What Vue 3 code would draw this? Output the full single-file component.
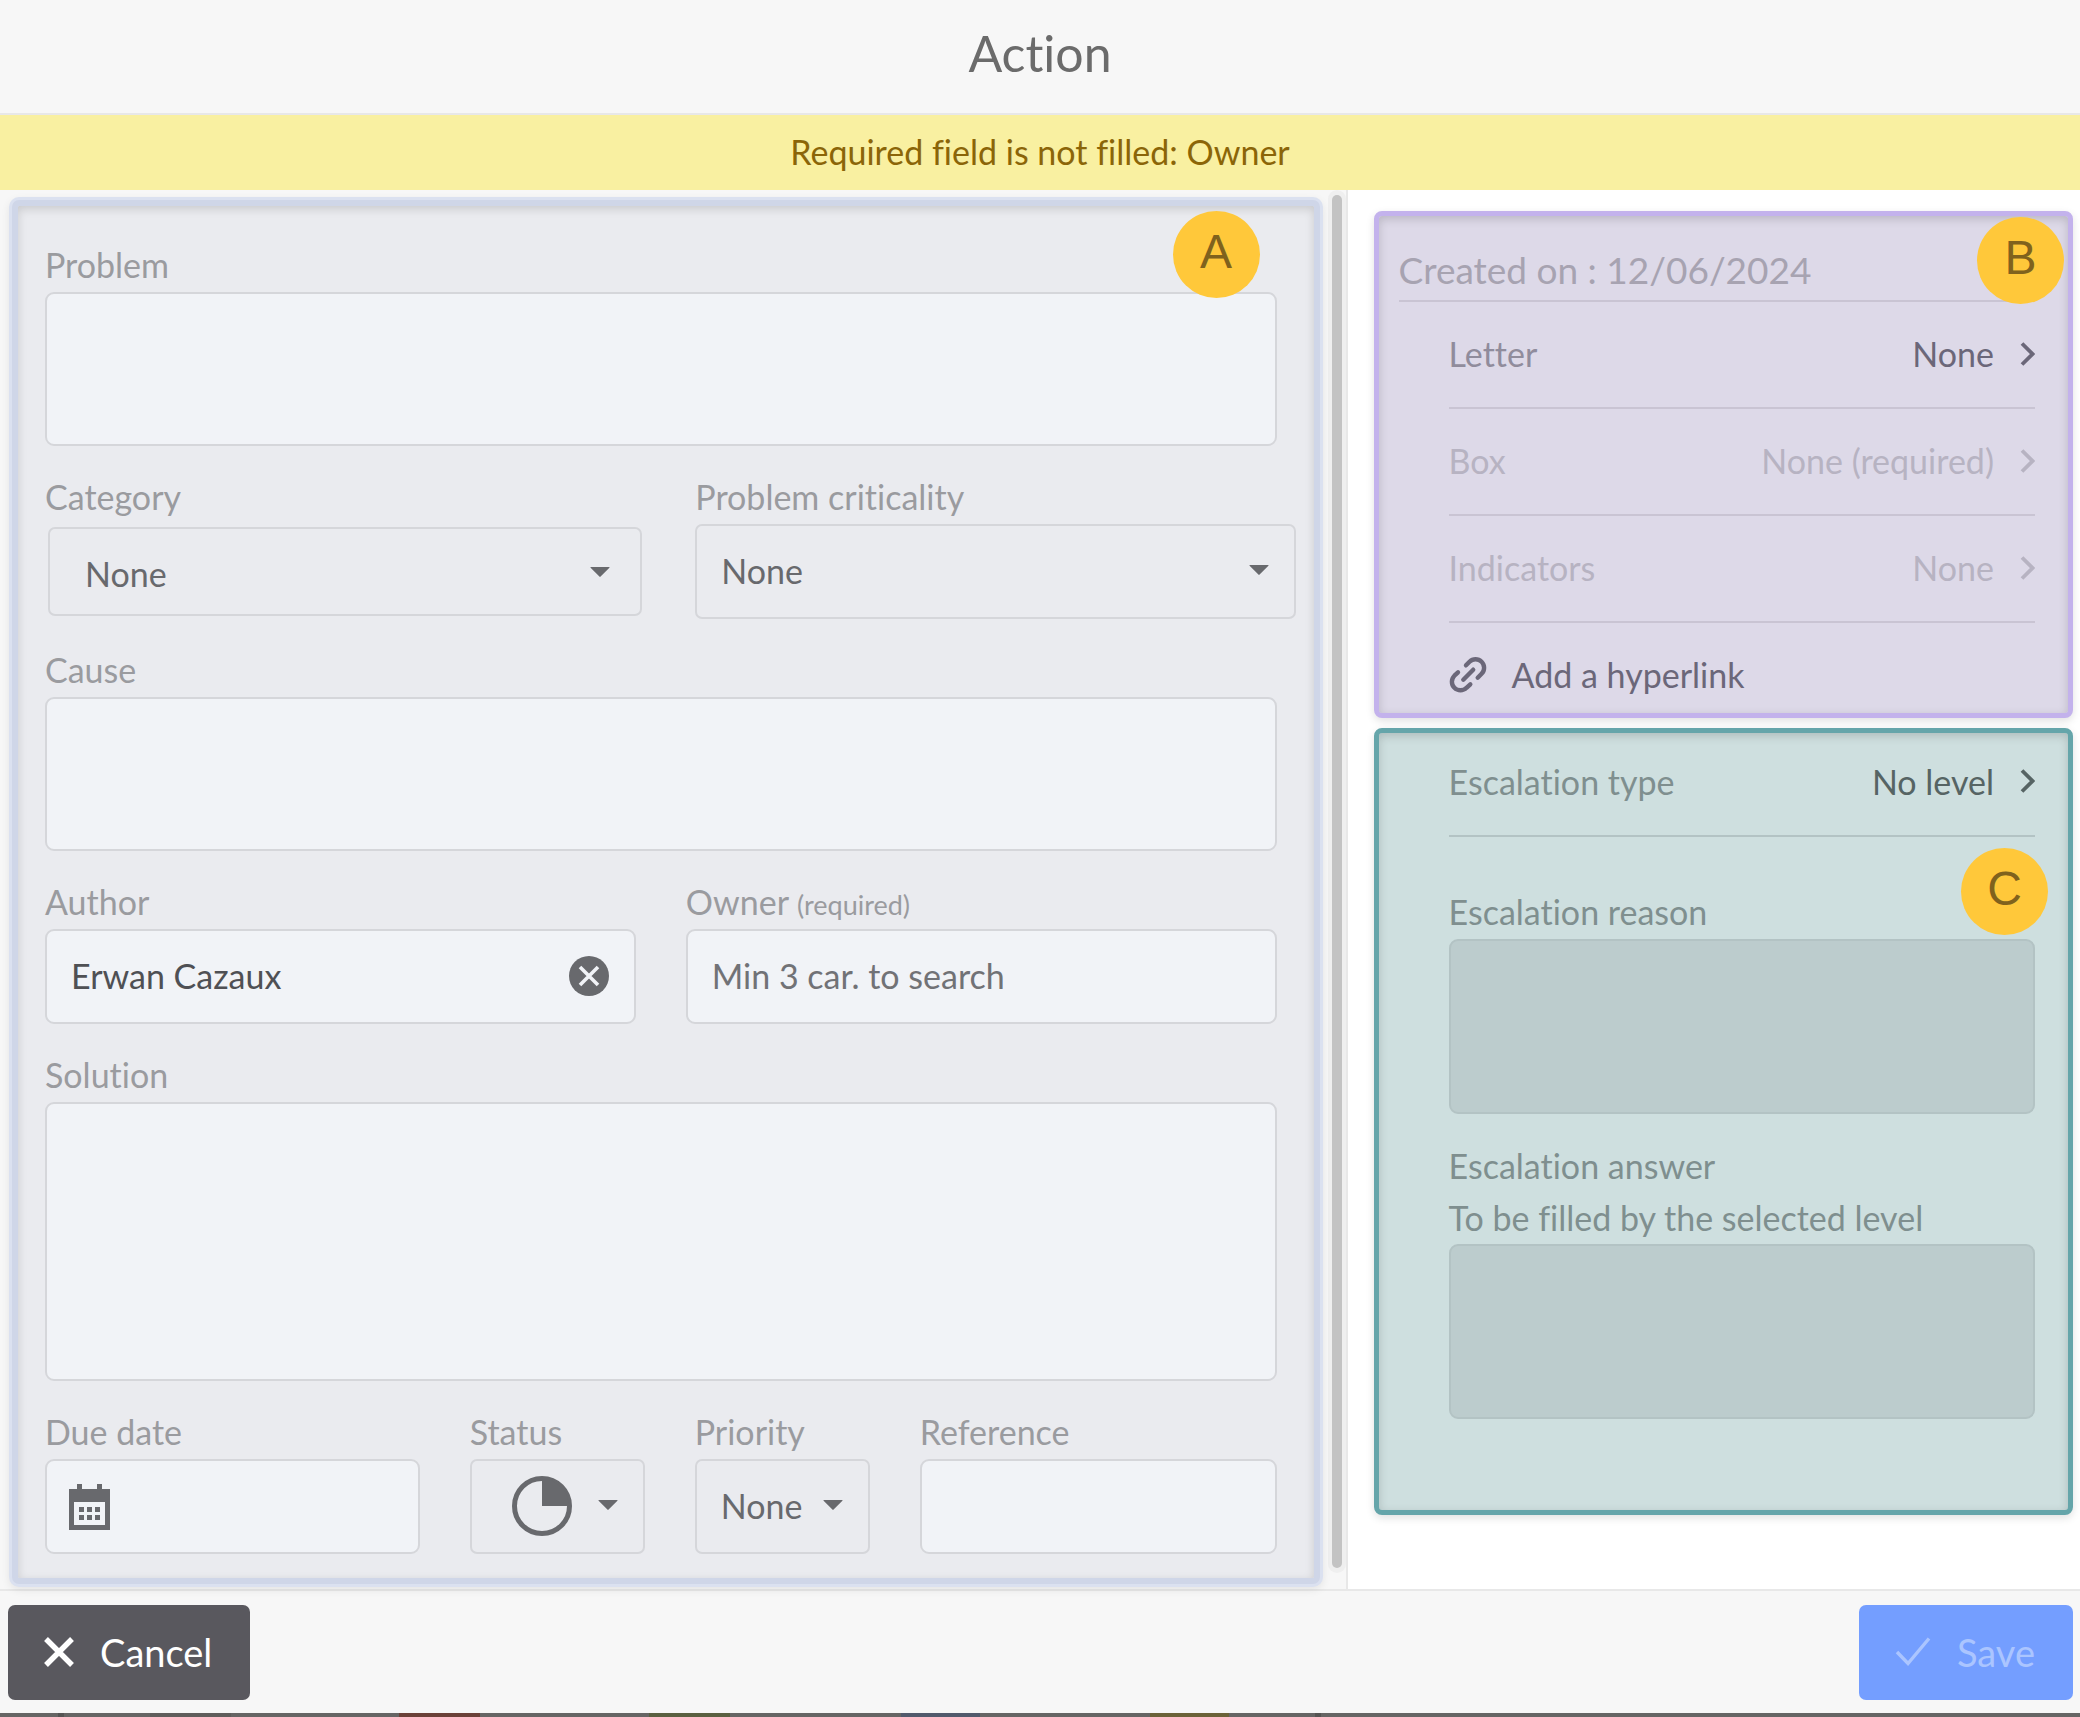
<script setup>
import { ref } from 'vue'

const problem = ref('')
const cause = ref('')
const author = ref('Erwan Cazaux')
const owner = ref('')
const solution = ref('')
const dueDate = ref('')
const reference = ref('')

const links = [
  { label: 'Letter', value: 'None', disabled: false },
  { label: 'Box', value: 'None (required)', disabled: true },
  { label: 'Indicators', value: 'None', disabled: true },
]

const strip = [
  { left: 2.8, width: 0.3, color: '#555453' },
  { left: 7.2, width: 3.9, color: '#5f5d5b' },
  { left: 19.2, width: 3.9, color: '#6b4138' },
  { left: 31.2, width: 3.9, color: '#5a6040' },
  { left: 43.3, width: 3.8, color: '#525a6c' },
  { left: 55.3, width: 3.8, color: '#6b6238' },
  { left: 63.2, width: 0.3, color: '#555453' },
]
</script>

<template>
  <div class="dialog">
    <header class="title-bar">
      <h1>Action</h1>
    </header>
    <p class="notice" role="alert">Required field is not filled: Owner</p>

    <main class="body">
      <section class="left">
        <form class="zone zone-a" @submit.prevent>
          <span class="badge badge-a">A</span>
          <div class="field">
            <label for="problem">Problem</label>
            <textarea id="problem" v-model="problem" class="control"></textarea>
          </div>
          <div class="row wide">
            <div class="field">
              <label for="category">Category</label>
              <div class="select inset">
                <select id="category" class="control"><option>None</option></select>
                <svg class="caret" viewBox="0 0 20 10"><path d="M1 0h18q1 0 .4.8L10.6 9.6q-.6.6-1.2 0L.6.8Q0 0 1 0z" /></svg>
              </div>
            </div>
            <div class="field">
              <label for="criticality">Problem criticality</label>
              <div class="select">
                <select id="criticality" class="control"><option>None</option></select>
                <svg class="caret" viewBox="0 0 20 10"><path d="M1 0h18q1 0 .4.8L10.6 9.6q-.6.6-1.2 0L.6.8Q0 0 1 0z" /></svg>
              </div>
            </div>
          </div>
          <div class="field">
            <label for="cause">Cause</label>
            <textarea id="cause" v-model="cause" class="control"></textarea>
          </div>
          <div class="row">
            <div class="field">
              <label for="author">Author</label>
              <div class="select">
                <input id="author" v-model="author" type="text" class="control author" />
                <button type="button" class="clear" aria-label="Clear author" @click="author = ''">
                  <svg viewBox="0 0 40 40">
                    <circle cx="20" cy="20" r="20" fill="#68696d" />
                    <path d="M11 11l18 18M29 11l-18 18" stroke="#f1f3f7" stroke-width="3.6" />
                  </svg>
                </button>
              </div>
            </div>
            <div class="field">
              <label for="owner">Owner <small>(required)</small></label>
              <input id="owner" v-model="owner" type="text" class="control" placeholder="Min 3 car. to search" />
            </div>
          </div>
          <div class="field">
            <label for="solution">Solution</label>
            <textarea id="solution" v-model="solution" class="control tall"></textarea>
          </div>
          <div class="row quad">
            <div class="field">
              <label for="due">Due date</label>
              <div class="select">
                <input id="due" v-model="dueDate" type="text" class="control" />
                <svg class="calendar" viewBox="0 0 41 46">
                  <path fill-rule="evenodd" d="M0 5h8V0h5v5h15V0h5v5h8v41H0zM5 18v23h31V18z" />
                  <path d="M10 23h5v5h-5zM18 23h5v5h-5zM26 23h5v5h-5zM10 31h5v5h-5zM18 31h5v5h-5zM26 31h5v5h-5z" />
                </svg>
              </div>
            </div>
            <div class="field">
              <label for="status">Status</label>
              <div class="select">
                <select id="status" class="control"><option value="25" label=" "></option></select>
                <svg class="pie" viewBox="0 0 60 60">
                  <circle cx="30" cy="30" r="27.5" fill="none" stroke="#68696d" stroke-width="5" />
                  <path d="M30 3a27 27 0 0 1 27 27H30z" />
                </svg>
                <svg class="caret" viewBox="0 0 20 10"><path d="M1 0h18q1 0 .4.8L10.6 9.6q-.6.6-1.2 0L.6.8Q0 0 1 0z" /></svg>
              </div>
            </div>
            <div class="field">
              <label for="priority">Priority</label>
              <div class="select">
                <select id="priority" class="control"><option>None</option></select>
                <svg class="caret" viewBox="0 0 20 10"><path d="M1 0h18q1 0 .4.8L10.6 9.6q-.6.6-1.2 0L.6.8Q0 0 1 0z" /></svg>
              </div>
            </div>
            <div class="field">
              <label for="reference">Reference</label>
              <input id="reference" v-model="reference" type="text" class="control" />
            </div>
          </div>
        </form>
        <div class="track"><div class="thumb"></div></div>
      </section>

      <aside class="right">
        <section class="zone zone-b">
          <span class="badge badge-b">B</span>
          <h2>Created on : 12/06/2024</h2>
          <div class="links">
            <button v-for="l in links" :key="l.label" type="button" class="link-row" :disabled="l.disabled">
              <span class="name">{{ l.label }}</span>
              <span>{{ l.value }}</span>
              <svg class="chevron" viewBox="0 0 15 24"><path d="M2 1.5L12.5 12 2 22.5" /></svg>
            </button>
            <button type="button" class="add-link">
              <svg viewBox="0 0 38 38">
                <path d="M17 9.3l3.5-3.6a8.55 8.55 0 0 1 12.1 12.1l-3.9 3.9M9 16.3l-3.6 3.4a8.55 8.55 0 0 0 12.1 12.1l3.8-3.5M14.3 23.7l9.9-10" />
              </svg>
              <span>Add a hyperlink</span>
            </button>
          </div>
        </section>

        <section class="zone zone-c">
          <span class="badge badge-c">C</span>
          <button type="button" class="link-row level">
            <span class="name">Escalation type</span>
            <span>No level</span>
            <svg class="chevron" viewBox="0 0 15 24"><path d="M2 1.5L12.5 12 2 22.5" /></svg>
          </button>
          <div class="field reason">
            <label for="reason">Escalation reason</label>
            <textarea id="reason" class="control" disabled></textarea>
          </div>
          <div class="field answer">
            <label for="answer">Escalation answer<br />To be filled by the selected level</label>
            <textarea id="answer" class="control" disabled></textarea>
          </div>
        </section>
      </aside>
    </main>

    <footer class="actions">
      <button type="button" class="btn cancel">
        <svg viewBox="0 0 30 30"><path d="M2 2l26 26M28 2l-26 26" stroke-width="5.4" /></svg>
        Cancel
      </button>
      <button type="button" class="btn save" disabled>
        <svg viewBox="0 0 36 30"><path d="M2 15l11 11.5L34 1.5" stroke-width="3.4" /></svg>
        Save
      </button>
    </footer>
    <div class="strip">
      <i v-for="s in strip" :key="s.left" :style="{ left: s.left + '%', width: s.width + '%', background: s.color }"></i>
    </div>
  </div>
</template>

<style>
body {
  margin: 0;
  background: #fff;
}
</style>

<style scoped>
* {
  box-sizing: border-box;
}
.dialog {
  min-height: 100vh;
  display: flex;
  flex-direction: column;
  font-family: Lato, "Noto Sans", sans-serif;
  font-size: 34px;
  font-variant-ligatures: none;
  color: #68696d;
}
button,
input,
select,
textarea {
  font: inherit;
  color: inherit;
  margin: 0;
}
button {
  border: 0;
  background: none;
  padding: 0;
  text-align: left;
}
.title-bar {
  display: flex;
  justify-content: center;
  align-items: center;
  height: 115px;
  padding-bottom: 8px;
  background: #f7f7f7;
  border-bottom: 2px solid #e8e8e8;
}
h1 {
  margin: 0;
  font-size: 50px;
  font-weight: 400;
  color: #6b6b6b;
}
.notice {
  margin: 0;
  padding-bottom: 2px;
  line-height: 73px;
  text-align: center;
  color: #8b6508;
  background: #f9f0a1;
}
.body {
  flex: 1;
  display: grid;
  grid-template-columns: minmax(0, 184fr) minmax(0, 100fr);
}
.left {
  display: flex;
  padding: 8px 0 2px 9px;
  background: #f7f7f7;
  border-right: 2px solid #e8e8e8;
}
.zone {
  position: relative;
  border: 5px solid;
  border-radius: 8px;
  box-shadow: 0 3px 8px rgba(0, 0, 0, 0.12), inset 0 3px 10px rgba(0, 0, 0, 0.16);
}
.zone-a {
  flex: 1;
  min-width: 0;
  display: flex;
  flex-direction: column;
  gap: 32px;
  margin: 2px 4px 3px 3px;
  padding: 40px 37px 23px 27px;
  border: 6px solid #cfd6e8;
  border-radius: 7px;
  background: #eaebef;
  box-shadow: 0 0 0 3px #dbe1f0, 0 3px 8px 3px rgba(0, 0, 0, 0.08), inset 0 3px 10px rgba(0, 0, 0, 0.14);
}
.track {
  width: 18px;
  margin: -8px 0 14px 4px;
  padding: 5px 4px;
  border-radius: 9px;
  background: #efefef;
}
.thumb {
  height: 100%;
  border-radius: 5px;
  background: #c3c3c3;
}
.badge {
  position: absolute;
  z-index: 1;
  width: 87px;
  height: 87px;
  border-radius: 50%;
  background: #ffc83a;
  color: #80621d;
  font: 48px/82px "Liberation Sans", Arial, sans-serif;
  text-align: center;
}
.badge-a {
  top: 5px;
  right: 54px;
}
.badge-b {
  top: 1px;
  right: 4px;
}
.badge-c {
  top: 115px;
  right: 20px;
}
.row {
  display: grid;
  grid-template-columns: minmax(0, 1fr) minmax(0, 1fr);
  column-gap: 50px;
}
.wide {
  margin-right: -19px;
}
.quad {
  grid-template-columns: minmax(0, 21fr) 175px 175px minmax(0, 20fr);
}
.field {
  display: flex;
  flex-direction: column;
}
label {
  line-height: 38px;
  padding-bottom: 8px;
  color: #9a9b9f;
  white-space: nowrap;
}
small {
  font-size: 27px;
  line-height: 1;
}
.control {
  display: block;
  width: 100%;
  height: 95px;
  padding: 0 24px 2px;
  border: 2px solid #d5d6da;
  border-radius: 9px;
  outline: 0;
  background: #f1f3f7;
  resize: none;
}
textarea.control {
  height: 154px;
}
textarea.tall {
  height: 279px;
}
.control::placeholder {
  color: #717276;
  opacity: 1;
}
.author {
  color: #4f5054;
}
select.control {
  appearance: none;
  background: #eaebef;
  border-radius: 7px;
}
.select {
  position: relative;
}
.inset {
  padding: 3px;
}
.inset .control {
  height: 89px;
  padding: 3px 35px 0;
}
.caret {
  position: absolute;
  right: 27px;
  top: 41px;
  width: 20px;
  height: 10px;
  fill: #68696d;
  pointer-events: none;
}
.inset .caret {
  right: 35px;
  top: 43px;
}
.clear {
  position: absolute;
  right: 27px;
  top: 27px;
  width: 40px;
  height: 40px;
}
.clear svg,
.calendar,
.pie {
  display: block;
}
.calendar {
  position: absolute;
  left: 24px;
  top: 25px;
  width: 41px;
  height: 46px;
  fill: #68696d;
}
.pie {
  position: absolute;
  left: 42px;
  top: 17px;
  width: 60px;
  height: 60px;
  fill: #68696d;
  pointer-events: none;
}
.right {
  display: flex;
  flex-direction: column;
  gap: 10px;
  padding: 21px 7px 0 26px;
  background: #fff;
}
.zone-b {
  padding: 0 33px 0 20px;
  border-color: #c3b2ec;
  background: #ddd9e8;
  color: #6b6779;
}
h2 {
  margin: 0;
  padding: 29px 0 5px;
  border-bottom: 2px solid #c9c4d3;
  font-size: 37px;
  line-height: 50px;
  font-weight: 400;
  color: #a7a3b1;
}
.links {
  padding-left: 50px;
}
.link-row {
  display: flex;
  align-items: center;
  width: 100%;
  height: 107px;
  padding-bottom: 2px;
  border-bottom: 2px solid #c9c4d3;
}
.name {
  flex: 1;
  color: #908c9c;
}
.link-row:disabled,
.link-row:disabled .name {
  color: #b7b3c2;
}
.chevron {
  width: 15px;
  height: 24px;
  margin-left: 26px;
  fill: none;
  stroke: currentColor;
  stroke-width: 3.8;
}
.add-link {
  display: flex;
  align-items: center;
  gap: 25px;
  height: 90px;
  padding-top: 13px;
}
.add-link svg {
  width: 38px;
  height: 38px;
  fill: none;
  stroke: currentColor;
  stroke-width: 4.4;
  stroke-linecap: round;
}
.zone-c {
  padding: 0 33px 91px 70px;
  border-color: #65a5aa;
  background: #cedfdf;
  color: #566464;
}
.level {
  height: 104px;
  padding-bottom: 6px;
  border-color: #b3c3c4;
}
.level .name,
.zone-c label {
  color: #7f8f8f;
}
.reason {
  margin-top: 56px;
}
.answer {
  margin-top: 26px;
}
.answer label {
  line-height: 52px;
  padding-bottom: 0;
}
.zone-c .control {
  height: 175px;
  border-color: #b3c3c4;
  background: #bccccd;
}
.actions {
  display: flex;
  justify-content: space-between;
  padding: 14px 7px 13px 8px;
  border-top: 2px solid #e8e8e8;
  background: #f7f7f7;
}
.btn {
  display: flex;
  align-items: center;
  height: 95px;
  padding: 0 38px 2px 36px;
  gap: 26px;
  border-radius: 7px;
  font-size: 38px;
}
.btn svg {
  height: 30px;
  fill: none;
  stroke: currentColor;
}
.cancel {
  background: #59585e;
  color: #fff;
}
.save {
  background: #749eff;
  color: #abc5ff;
}
.strip {
  position: relative;
  height: 4px;
  background: #666564;
}
.strip i {
  position: absolute;
  top: 0;
  bottom: 0;
}
</style>
